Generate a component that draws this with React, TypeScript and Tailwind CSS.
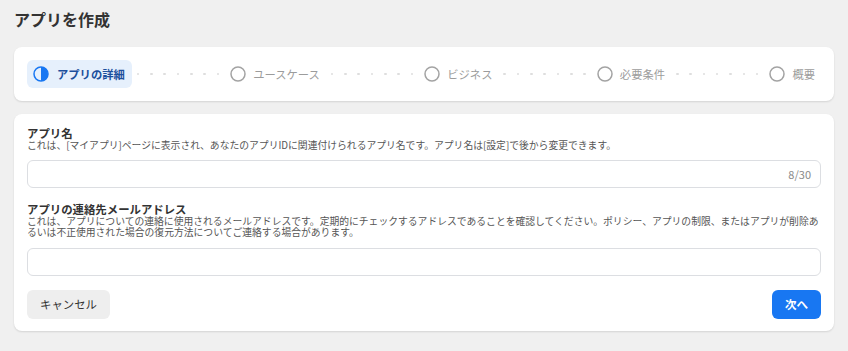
import React from "react";

const font = { fontFamily: "'Noto Sans CJK JP', 'Noto Sans', sans-serif" };

function Dots() {
  return (
    <div className="flex-1 flex items-center justify-between px-[5px]">
      {[0, 1, 2, 3, 4, 5, 6].map((i) => (
        <span key={i} className="block w-[2.5px] h-[2.5px] rounded-full bg-[#dedede]" />
      ))}
    </div>
  );
}

function Step({ label }: { label: string }) {
  return (
    <div className="flex items-center gap-[7px] px-[6px] h-[28px]">
      <svg width="16" height="16" viewBox="0 0 16 16">
        <circle cx="8" cy="8" r="7" fill="none" stroke="#a3a3a3" strokeWidth="1.5" />
      </svg>
      <span className="text-[11.3px] leading-[14px] text-[#9c9c9c]">{label}</span>
    </div>
  );
}

export default function App() {
  return (
    <div className="w-[848px] h-[351px] bg-[#f0f0f0] px-[14px] pt-[9px] overflow-hidden" style={font}>
      <h1 className="text-[16px] leading-[20px] font-bold text-[#333]">アプリを作成</h1>

      <div className="mt-[18px] bg-white rounded-[8px] shadow-[0_1px_2px_rgba(0,0,0,0.12)] px-[13px] py-[13px] flex items-center">
        <div className="flex items-center gap-[8px] pl-[6px] pr-[7px] h-[28px] rounded-[6px] bg-[#e6f0fc]">
          <svg width="16" height="16" viewBox="0 0 16 16">
            <circle cx="8" cy="8" r="7" fill="none" stroke="#1877f2" strokeWidth="1.5" />
            <path d="M8 1 A7 7 0 0 1 8 15 Z" fill="#1877f2" />
          </svg>
          <span className="text-[11.3px] leading-[14px] font-bold text-[#1c4f9c]">アプリの詳細</span>
        </div>
        <Dots />
        <Step label="ユースケース" />
        <Dots />
        <Step label="ビジネス" />
        <Dots />
        <Step label="必要条件" />
        <Dots />
        <Step label="概要" />
      </div>

      <div className="mt-[13px] bg-white rounded-[8px] shadow-[0_1px_2px_rgba(0,0,0,0.12)] px-[13px] pt-[13px] pb-[12px]">
        <div className="text-[11.4px] leading-[13px] font-bold text-[#333]">アプリ名</div>
        <div className="text-[9.8px] leading-[11px] text-[#555] whitespace-nowrap">
          これは、[マイアプリ]ページに表示され、あなたのアプリIDに関連付けられるアプリ名です。アプリ名は[設定]で後から変更できます。
        </div>
        <div className="mt-[9px] h-[28px] rounded-[6px] border border-[#dcdee2] flex items-center justify-end pr-[9px]">
          <span className="text-[11px] text-[#8a8a8a]">8/30</span>
        </div>

        <div className="mt-[15px] text-[11.4px] leading-[13px] font-bold text-[#333]">アプリの連絡先メールアドレス</div>
        <div className="text-[9.8px] leading-[11px] text-[#555] whitespace-nowrap">
          これは、アプリについての連絡に使用されるメールアドレスです。定期的にチェックするアドレスであることを確認してください。ポリシー、アプリの制限、またはアプリが削除あ
          <br />
          るいは不正使用された場合の復元方法についてご連絡する場合があります。
        </div>
        <div className="mt-[10px] h-[28px] rounded-[6px] border border-[#dcdee2]" />

        <div className="mt-[14px] flex items-center justify-between">
          <button className="h-[29px] px-[13px] rounded-[6px] bg-[#eeeeee] text-[11.4px] text-[#333]">キャンセル</button>
          <button className="h-[29px] px-[13px] rounded-[6px] bg-[#1877f2] text-[11.5px] font-bold text-white">次へ</button>
        </div>
      </div>
    </div>
  );
}
